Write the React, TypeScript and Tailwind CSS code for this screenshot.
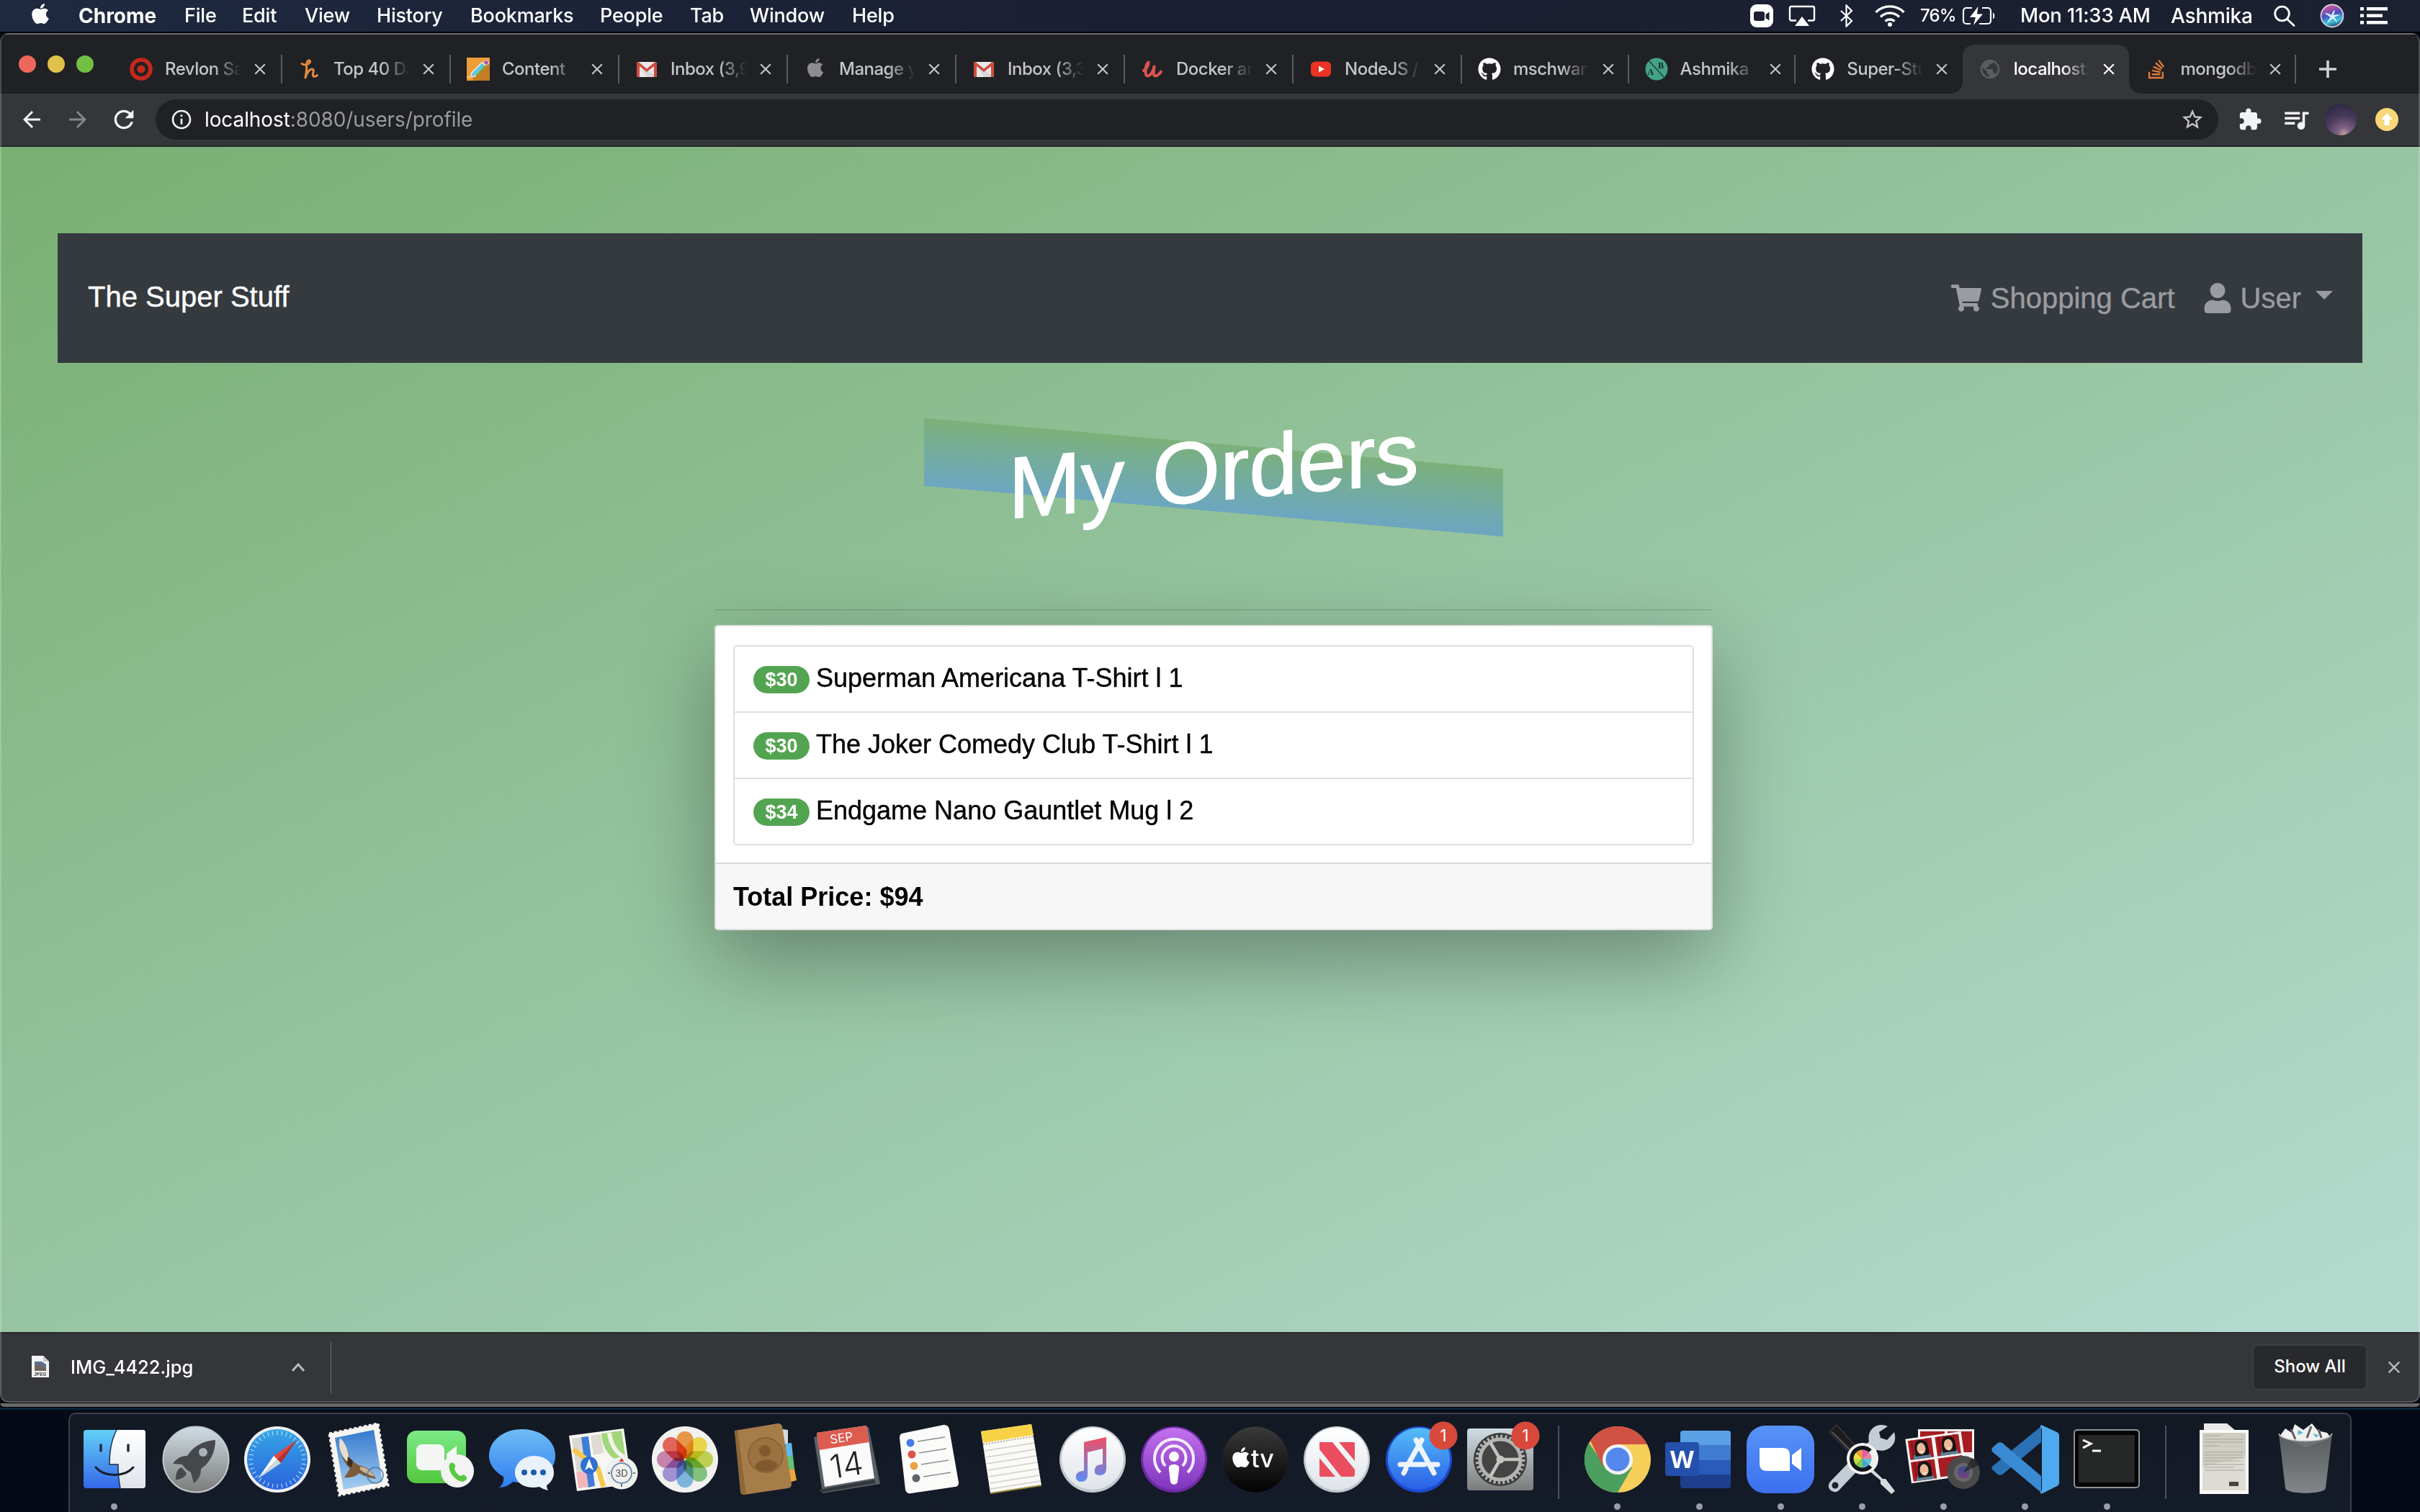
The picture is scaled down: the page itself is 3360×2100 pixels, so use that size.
import React from "react";
import {
  FaApple,
  FaGithub,
  FaShoppingCart,
  FaStackOverflow,
  FaUser,
} from "react-icons/fa";
import {
  MdArrowBack,
  MdArrowForward,
  MdClose,
  MdExtension,
  MdInfoOutline,
  MdPublic,
  MdQueueMusic,
  MdRefresh,
  MdStarBorder,
} from "react-icons/md";

/* ---------- macOS menu bar ---------- */

const menuItems = [
  { label: "Chrome", box: "w-[147px] text-[28px] font-bold tracking-[0px]" },
  { label: "File", box: "w-[80px]" },
  { label: "Edit", box: "w-[87px]" },
  { label: "View", box: "w-[100px]" },
  { label: "History", box: "w-[130px]" },
  { label: "Bookmarks", box: "w-[180px]" },
  { label: "People", box: "w-[125px]" },
  { label: "Tab", box: "w-[83px]" },
  { label: "Window", box: "w-[142px]" },
  { label: "Help", box: "w-[80px]" },
];

function MenuBar() {
  return (
    <header className="flex h-[44px] shrink-0 items-center bg-linear-to-r from-[#1e293f] via-[#1a1e33] to-[#1b2130] text-[27px] font-medium tracking-[-0.200px] text-white">
      <FaApple className="mr-[37px] mb-[6px] ml-[40px] size-[32px]" />
      {menuItems.map((m) => (
        <span key={m.label} className={m.box}>
          {m.label}
        </span>
      ))}
      <div className="ml-auto flex items-center">
        <svg className="mr-[20px] h-[32px] w-[34px]" viewBox="0 0 34 32">
          <rect x="1" width="32" height="32" rx="9" fill="#fff" />
          <rect x="6" y="10" width="15" height="13" rx="3" fill="#1a1f31" />
          <path d="M22.500 14l5-3.500v12l-5-3.500z" fill="#1a1f31" />
        </svg>
        <svg className="mr-[33px] h-[30px] w-[38px]" viewBox="0 0 38 30" fill="none" stroke="#fff" strokeWidth="2.400">
          <path d="M11 21.500H4a2 2 0 0 1-2-2V4a2 2 0 0 1 2-2h30a2 2 0 0 1 2 2v15.500a2 2 0 0 1-2 2h-7" />
          <path d="M19 16l10 13H9z" fill="#fff" stroke="none" />
        </svg>
        <svg className="mr-[28px] h-[32px] w-[20px]" viewBox="0 0 20 32" fill="none" stroke="#fff" strokeWidth="2.200">
          <path d="M2 9l15 14-7.500 7.500V1.500L17 9 2 23" />
        </svg>
        <svg className="mr-[20px] h-[32px] w-[44px]" viewBox="0 0 44 32" fill="none" stroke="#fff" strokeWidth="3.400">
          <path d="M2.500 11a27.500 27.500 0 0 1 39 0" />
          <path d="M9 17.500a18.500 18.500 0 0 1 26 0" />
          <path d="M15.500 23.500a9.500 9.500 0 0 1 13 0" />
          <circle cx="22" cy="28" r="3" fill="#fff" stroke="none" />
        </svg>
        <span className="w-[58px] text-[24px] tracking-[-0.800px]">76%</span>
        <svg className="mr-[34px] h-[26px] w-[47px]" viewBox="0 0 47 26" fill="none" stroke="#fff" strokeWidth="2.200">
          <path d="M14 2H6a4 4 0 0 0-4 4v14a4 4 0 0 0 4 4h6M28 2h8a4 4 0 0 1 4 4v14a4 4 0 0 1-4 4H24" />
          <path d="M22.500 0L11 15h8l-3 11 13-15.500h-8z" fill="#fff" stroke="none" />
          <path d="M43 8.500c3 1.500 3 7.500 0 9z" fill="#fff" stroke="none" />
        </svg>
        <span className="w-[209px] text-[27.500px] whitespace-nowrap">Mon 11:33 AM</span>
        <span className="w-[143px] text-[28px]">Ashmika</span>
        <svg className="mr-[34px] h-[30px] w-[30px]" viewBox="0 0 30 30" fill="none" stroke="#fff" strokeWidth="2.800">
          <circle cx="11.500" cy="12" r="9.800" />
          <path d="M18.500 19.500l9.500 9" strokeLinecap="round" />
        </svg>
        <svg className="mr-[22px] h-[34px] w-[34px]" viewBox="0 0 34 34">
          <defs>
            <linearGradient id="siri" x1="0.300" y1="0" x2="0.600" y2="1">
              <stop offset="0" stopColor="#e8508e" />
              <stop offset="0.450" stopColor="#4b4fc4" />
              <stop offset="0.750" stopColor="#3cc6d8" />
              <stop offset="1" stopColor="#2b3a6e" />
            </linearGradient>
          </defs>
          <circle cx="17" cy="17" r="15.500" fill="url(#siri)" stroke="#cfd3e2" strokeWidth="1.800" />
          <path d="M6 13c4 0 8 1 10 3 1-3 2-6 5-7-1 3-1 5-2 7 3-1 6-1 9 0-3 1-6 2-8 3 2 2 4 5 4 8-2-3-4-5-6-6-3 2-6 4-8 7 1-4 3-7 5-9-3-2-6-4-9-6z" fill="#e6fbff" opacity=".9" />
        </svg>
        <svg className="mr-[45px] h-[26px] w-[38px]" viewBox="0 0 38 26" fill="#fff">
          <path d="M0 1h5v4.500H0zM9 1h29v4.500H9zM0 10.500h5V15H0zM9 10.500h22V15H9zM0 20h5v4.500H0zM9 20h29v4.500H9z" />
        </svg>
      </div>
    </header>
  );
}

/* ---------- browser tab strip ---------- */

const TargetIcon = () => (
  <svg viewBox="0 0 32 32" className="size-[32px]">
    <circle cx="16" cy="16" r="13" fill="none" stroke="#c4281c" strokeWidth="5.600" />
    <circle cx="16" cy="16" r="5.600" fill="#c4281c" />
  </svg>
);
const HoneyIcon = () => (
  <svg viewBox="0 0 32 32" className="size-[32px]" fill="none" stroke="#e58a3c" strokeWidth="3" strokeLinecap="round" strokeLinejoin="round">
    <path d="M5 8.500c4 2.500 9 1.500 11-1.500 1.500-2.500-.5-4-2.500-2.500C11 6.500 12 12 11.500 18L10 28c2-6 5-12 9-12 3.500 0 2 4 1.500 7s1.500 5 6 1.500" />
  </svg>
);
const ContentIcon = () => (
  <svg viewBox="0 0 32 32" className="size-[32px]">
    <path d="M0 0h32v32H0z" fill="#ee9d37" />
    <path d="M27 7l5 4v21H10l-3-5z" fill="#c57c25" />
    <path d="M7 21L21 7l5 4-15 15-5 1z" fill="#5cc6e0" stroke="#f3ecdc" strokeWidth="1.500" />
    <path d="M13 25L26 11" stroke="#63b54d" strokeWidth="2" />
    <path d="M23 6l4-3 4 4-4 4z" fill="#a654b5" stroke="#e9d9ea" strokeWidth="1" />
    <path d="M0 27h8" stroke="#f5c788" strokeWidth="2" />
  </svg>
);
const GmailIcon = () => (
  <svg viewBox="0 0 32 32" className="size-[32px]">
    <rect x="2" y="6" width="28" height="21" rx="2.500" fill="#e9e9e9" />
    <path d="M6 8l10 9 14 10H16z" fill="#c9c9c9" opacity=".6" />
    <path d="M2 8.500A2.500 2.500 0 0 1 4.500 6L16 15.500 27.500 6A2.500 2.500 0 0 1 30 8.500V25a2 2 0 0 1-2 2h-2V12l-10 8L6 12v15H4a2 2 0 0 1-2-2z" fill="#cf4b3e" />
  </svg>
);
const UdemyIcon = () => (
  <svg viewBox="0 0 32 32" className="size-[32px]" fill="none" stroke="#dc5252" strokeWidth="4" strokeLinecap="round" strokeLinejoin="round">
    <path d="M4 18c4-2 7-8 6.500-11.500C8 8 6.500 14 6.500 19c0 4 1 6.500 3 6.500 4 0 8-7 9-13-1 8-1.500 13 1.500 13s5-2 8-6" />
  </svg>
);
const YoutubeIcon = () => (
  <svg viewBox="0 0 32 32" className="size-[32px]">
    <rect x="2" y="5.500" width="28" height="21" rx="6" fill="#ea3323" />
    <path d="M13 11.500l8 4.500-8 4.500z" fill="#fff" />
  </svg>
);
const AbIcon = () => (
  <svg viewBox="0 0 32 32" className="size-[32px]">
    <circle cx="16" cy="16" r="15.500" fill="#44a287" />
    <path d="M5 4l21 23" stroke="#15372e" strokeWidth="1.200" />
    <text x="3.500" y="24" fontSize="12" fontWeight="700" fontFamily="Liberation Serif" fill="#10251f">A</text>
    <text x="18" y="15" fontSize="12" fontWeight="700" fontFamily="Liberation Serif" fill="#10251f">B</text>
  </svg>
);

type TabInfo = { title: string; icon: React.ReactNode; active?: boolean; noLine?: boolean };

const tabs: TabInfo[] = [
  { title: "Revlon Sa", icon: <TargetIcon /> },
  { title: "Top 40 Da", icon: <HoneyIcon /> },
  { title: "Content", icon: <ContentIcon /> },
  { title: "Inbox (3,9", icon: <GmailIcon /> },
  { title: "Manage y", icon: <FaApple className="mb-[4px] size-[30px] text-[#8d8d8f]" /> },
  { title: "Inbox (3,3", icon: <GmailIcon /> },
  { title: "Docker an", icon: <UdemyIcon /> },
  { title: "NodeJS /", icon: <YoutubeIcon /> },
  { title: "mschwarz", icon: <FaGithub className="size-[32px] text-white" /> },
  { title: "Ashmika", icon: <AbIcon /> },
  { title: "Super-Stu", icon: <FaGithub className="size-[32px] text-white" />, noLine: true },
  { title: "localhost:", icon: <MdPublic className="size-[32px] text-[#5b5c60]" />, active: true, noLine: true },
  { title: "mongodb", icon: <FaStackOverflow className="size-[30px] text-[#e07b39]" /> },
];

function Tab({ title, icon, active, noLine }: TabInfo) {
  return (
    <div
      className={
        active
          ? "relative flex h-[68px] w-full items-center rounded-t-[16px] bg-[#35363a] text-white"
          : "relative flex h-[68px] w-full items-center text-[#c3c5c8]"
      }
    >
      {active && (
        <>
          <i className="absolute bottom-0 left-[-16px] size-[16px] bg-[radial-gradient(circle_at_0_0,transparent_15.500px,#35363a_16px)]" />
          <i className="absolute right-[-16px] bottom-0 size-[16px] bg-[radial-gradient(circle_at_100%_0,transparent_15.500px,#35363a_16px)]" />
        </>
      )}
      <span className="ml-[22px] flex w-[32px] justify-center">{icon}</span>
      <span className="ml-[17px] w-[108px] text-[24px] font-medium tracking-[-0.500px] whitespace-nowrap [mask-image:linear-gradient(to_right,black_62%,transparent_98%)]">
        {title}
      </span>
      <MdClose className="ml-[11px] size-[26px]" />
      {!noLine && <span className="ml-auto h-[40px] w-[2px] bg-[#5a5b5f]" />}
    </div>
  );
}

function TabStrip() {
  return (
    <div className="flex h-[84px] shrink-0 items-end border-t-2 border-[#6d6e6e] bg-[#202124]">
      <div className="mb-[29px] ml-[26px] flex w-[132px] gap-[16px]">
        <span className="size-[24px] rounded-full bg-[#ee675c]" />
        <span className="size-[24px] rounded-full bg-[#e0c14b]" />
        <span className="size-[24px] rounded-full bg-[#71c044]" />
      </div>
      {tabs.map((t, i) => (
        <div key={i} className={i < 8 ? "w-[234px] shrink-0" : "w-[231.600px] shrink-0"}>
          <Tab {...t} />
        </div>
      ))}
      <svg className="mb-[21px] ml-[31px] size-[26px]" viewBox="0 0 26 26" stroke="#d0d2d5" strokeWidth="3.600">
        <path d="M13 1v24M1 13h24" />
      </svg>
    </div>
  );
}

function Toolbar() {
  return (
    <div className="flex h-[74px] shrink-0 items-center border-b-2 border-[#252629] bg-[#35363a] text-[#f1f3f4]">
      <MdArrowBack className="ml-[26px] size-[36px]" />
      <MdArrowForward className="ml-[28px] size-[36px] text-[#85868a]" />
      <MdRefresh className="ml-[26px] size-[40px]" />
      <div className="ml-[24px] flex h-[56px] w-[2864px] items-center rounded-full bg-[#202124]">
        <MdInfoOutline className="ml-[20px] size-[32px]" />
        <span className="ml-[16px] text-[28px] tracking-[-0.100px] text-[#9a9b9e]">
          <span className="text-white">localhost</span>:8080/users/profile
        </span>
        <MdStarBorder className="mr-[19px] ml-auto size-[34px] text-[#c7c8ca]" />
      </div>
      <MdExtension className="ml-[27px] size-[34px]" />
      <MdQueueMusic className="ml-[26px] size-[42px]" />
      <span className="ml-[19px] size-[44px] rounded-full bg-[radial-gradient(circle_at_60%_95%,#c29ba0_0,#7d6283_18%,#4a3b5c_50%,#2d2843_85%)]" />
      <svg className="ml-[25px] size-[34px]" viewBox="0 0 34 34">
        <circle cx="17" cy="17" r="16" fill="#f8d779" />
        <path d="M17 8l8 9h-4.500v8h-7v-8H9z" fill="#fff" />
      </svg>
    </div>
  );
}

/* ---------- web page ---------- */

const orders = [
  { price: "$30", text: "Superman Americana T-Shirt l 1" },
  { price: "$30", text: "The Joker Comedy Club T-Shirt l 1" },
  { price: "$34", text: "Endgame Nano Gauntlet Mug l 2" },
];

function OrdersPage() {
  return (
    <main className="flex h-[1646px] shrink-0 flex-col items-center bg-[linear-gradient(to_bottom_right,#79af73,#b5dbd0)] font-['Liberation_Sans',Arial,sans-serif] text-black">
      <nav className="mt-[120px] flex h-[180px] w-[3200px] shrink-0 items-center bg-[#353a3f] pr-[41px] pl-[42px] text-[40px] text-[#999ca0]">
        <span className="mb-[4px] [-webkit-text-stroke:0.400px]">
          <span className="text-white">The Super Stuff</span>
        </span>
        <span className="ml-auto flex items-center">
          <FaShoppingCart className="mr-[13px] size-[42px]" />
          <span className="[-webkit-text-stroke:0.400px]">Shopping Cart</span>
        </span>
        <span className="ml-[38px] flex items-center">
          <FaUser className="mr-[11px] size-[42px]" />
          <span className="[-webkit-text-stroke:0.400px]">User</span>
          <i className="mb-[8px] ml-[20px] border-x-[12px] border-t-[12px] border-x-transparent border-t-[#999ca0]" />
        </span>
      </nav>
      <section className="flex w-[1386px] translate-x-[5px] flex-col items-center">
        <h1 className="mt-[112px] flex h-[94px] w-[804px] skew-y-[5deg] items-center justify-center bg-linear-to-b from-[#7cb078] to-[#6ca6c1] text-[121px] leading-none text-white">
          <span className="-translate-y-[10px] skew-y-[-10deg] [word-spacing:5px] whitespace-nowrap [-webkit-text-stroke:1.400px]">My Orders</span>
        </h1>
        <hr className="mt-[136px] w-full border-t-2 border-black/10" />
        <div className="mt-[20px] w-full rounded-[5px] border-2 border-[#dfdfdf] bg-white shadow-[0_40px_120px_rgba(0,0,0,0.340)]">
          <ul className="mx-[24px] mt-[26px] mb-[24px] rounded-[5px] border-2 border-[#dfdfdf] text-[36px]">
            {orders.map((o) => (
              <li key={o.text} className="flex h-[92px] items-center border-b-2 border-[#dfdfdf] pl-[26px] last:h-[90px] last:border-b-0">
                <span className="mt-[2px] mr-[9px] flex h-[38px] w-[78px] items-center justify-center rounded-full bg-[#53a451] text-[27px] font-bold text-white">
                  {o.price}
                </span>
                <span className="mb-[2px] [-webkit-text-stroke:0.400px]">{o.text}</span>
              </li>
            ))}
          </ul>
          <div className="flex h-[92px] items-center rounded-b-[4px] border-t-2 border-[#d8d8d8] bg-[#f7f7f7] pt-[2px] pl-[24px] text-[36px] font-bold">
            Total Price: $94
          </div>
        </div>
      </section>
    </main>
  );
}

function DownloadBar() {
  return (
    <div className="flex h-[98px] shrink-0 items-center rounded-b-[12px] border-t-2 border-b-2 border-t-[#2a2b2e] border-b-[#5a5a5d] bg-[#353639] text-[25.500px] font-medium text-white">
      <svg className="mb-[2px] ml-[44px] h-[30px] w-[24px]" viewBox="0 0 24 30">
        <path d="M0 0h16l8 8v22H0z" fill="#f4f4f4" />
        <path d="M16 0v8h8z" fill="#c8c8c8" />
        <path d="M4 8h10l6 4v8H4z" fill="#5a6f96" />
        <path d="M4 14l7-3 9 8v2H4z" fill="#6e665a" />
        <text x="3" y="27.500" fontSize="6.500" fontWeight="700" fill="#444" fontFamily="Liberation Sans">JPEG</text>
      </svg>
      <span className="ml-[30px] w-[307px]">IMG_4422.jpg</span>
      <svg className="size-[18px]" viewBox="0 0 18 18" fill="none" stroke="#b9babc" strokeWidth="3">
        <path d="M1 14l8-9 8 9" />
      </svg>
      <span className="ml-[36px] h-[72px] w-[1px] bg-[#6d6e71]" />
      <span className="ml-auto flex h-[64px] w-[160px] items-center justify-center rounded-[8px] border-2 border-[#3c3d40] bg-[#28292c] pb-[2px] text-[24px]">
        Show All
      </span>
      <MdClose className="mr-[22px] ml-[23px] size-[28px] text-[#b9babc]" />
    </div>
  );
}

/* ---------- dock ---------- */

type IconProps = { children: React.ReactNode };
const Art = ({ children }: IconProps) => (
  <svg viewBox="0 0 100 100" className="size-[100px] overflow-visible">
    {children}
  </svg>
);

const Badge = ({ x }: { x: number }) => (
  <g>
    <circle cx={x} cy="17" r="19.500" fill="#d8493c" />
    <text x={x} y="25" textAnchor="middle" fontSize="23" fill="#fff" fontFamily="Inter">1</text>
  </g>
);

const ticks = Array.from({ length: 36 }, (_, i) => i * 10);
const petals = [
  ["#f3a04a", 0],
  ["#f8e24e", 45],
  ["#c9dc58", 90],
  ["#8ccb88", 135],
  ["#86bfeb", 180],
  ["#a99add", 225],
  ["#d28cb8", 270],
  ["#ef6a5e", 315],
] as const;
const wheel = ["#e05aa6", "#f07ba0", "#58c3de", "#48a7c9", "#7dcb5a", "#b6dc4b", "#f2dc43", "#f09a45"];

const Finder = () => (
  <Art>
    <rect x="7" y="9" width="86" height="81" rx="4" fill="url(#gFinder)" />
    <path d="M53 9h36a4 4 0 0 1 4 4v73a4 4 0 0 1-4 4H58c-2-9-3-21-3-33H43C43 38 46 22 53 9z" fill="url(#gPaper)" />
    <path d="M31 30v8M69 30v8" stroke="#1c2c42" strokeWidth="3.500" strokeLinecap="round" />
    <path d="M24 61c12 14 40 14 52 0" fill="none" stroke="#14202f" strokeWidth="3" strokeLinecap="round" />
    <path d="M53 9c-7 13-10 29-10 48h12c0 12 1 24 3 33" fill="none" stroke="#1d2c44" strokeWidth="1.500" />
  </Art>
);
const Launchpad = () => (
  <Art>
    <circle cx="50" cy="50" r="45.500" fill="url(#gSteel)" stroke="#c3c9cc" strokeWidth="2" />
    <path d="M77 23c-18 1-32 10-39 22-9 0-15 4-20 11l13 1c3 5 8 9 12 11l4 15c7-5 10-11 10-20 12-8 20-22 20-40z" fill="#45494c" />
    <circle cx="60" cy="40" r="6" fill="#a9b3b8" />
    <path d="M30 61c-7 3-8 10-8 17 7 0 13-3 15-9z" fill="#45494c" />
  </Art>
);
const Safari = () => (
  <Art>
    <circle cx="50" cy="50" r="46" fill="#eef0f2" />
    <circle cx="50" cy="50" r="42" fill="url(#gSafari)" />
    <g stroke="#cfe6fb" strokeWidth="1">
      {ticks.map((a) => (
        <path key={a} d="M50 10v6" transform={`rotate(${a} 50 50)`} />
      ))}
    </g>
    <path d="M77 23L45 45l5 5z" fill="#e8453c" />
    <path d="M77 23L55 55l-5-5z" fill="#b92f2b" />
    <path d="M23 77l22-32 5 5z" fill="#fff" />
    <path d="M23 77l32-22-5-5z" fill="#cfd8de" />
  </Art>
);
const MailIcon = () => (
  <Art>
    <path d="M9 14l68-14 14 86-68 14z" fill="#f6f5f2" stroke="#f6f5f2" strokeWidth="3" strokeDasharray="4 3" />
    <path d="M17 20l54-11 12 72-54 11z" fill="url(#gSky)" />
    <path d="M24 22c7 6 12 16 14 28l12 8c12 2 20 9 24 19-9-1-17-4-23-8-6 5-13 7-21 6l8-12C28 53 22 38 24 22z" fill="#7b5b38" />
    <path d="M24 20c-3 12 1 25 10 33l3-3c-2-14-6-24-13-30z" fill="#e6ddd0" />
    <path d="M52 60c9 1 16 6 20 14-8-2-15-6-20-10z" fill="#c9b596" />
    <path d="M35 46l7 6-2 9-6-4z" fill="#3e2c1c" />
    <circle cx="73" cy="72" r="11" fill="none" stroke="#4f7099" strokeWidth="2" opacity=".7" />
  </Art>
);
const Facetime = () => (
  <Art>
    <rect x="4" y="10" width="82" height="73" rx="13" fill="url(#gGreen)" />
    <rect x="17" y="29" width="39" height="36" rx="8" fill="#f4f6f4" />
    <path d="M59 42l14-11v32l-14-10z" fill="#f4f6f4" />
    <circle cx="74" cy="66" r="23" fill="#f3f3f3" />
    <path d="M63 57c3-4 6-3 8 1 1 3-2 4-1 6 2 4 4 7 8 9 2 0 3-3 6-1 4 2 4 5 0 8-9 4-24-12-21-23z" fill="#56c940" />
  </Art>
);
const Messages = () => (
  <Art>
    <path d="M50 8c26 0 46 16 46 37S76 82 50 82c-5 0-9 0-13-1-5 5-12 8-19 8 5-4 7-9 6-15C12 67 4 57 4 45 4 24 24 8 50 8z" fill="url(#gBlue)" />
    <path d="M67 45c15 0 27 10 27 23 0 8-4 14-10 18 0 3 1 5 2 7-5-1-9-3-12-5-21 4-34-6-34-20 0-13 12-23 27-23z" fill="#e9f1fa" />
    <g fill="#1d5bab">
      <circle cx="53" cy="68" r="4" />
      <circle cx="66" cy="68" r="4" />
      <circle cx="79" cy="68" r="4" />
    </g>
  </Art>
);
const Maps = () => (
  <Art>
    <path d="M2 17L78 7l11 77-76 10z" fill="#f8f6f2" />
    <path d="M6 21l14-2 9 68-13 3z" fill="#d9d9d2" />
    <path d="M19 19l10-1 9 69-10 2z" fill="#3f7ed8" />
    <path d="M32 17l14-2 4 26-14 3z" fill="#dedcd2" />
    <path d="M47 14l28-4 7 48c-20-6-34-21-35-44z" fill="#a2d67a" />
    <path d="M58 13c2 16 8 27 21 34" fill="none" stroke="#f2f2e6" strokeWidth="6" />
    <path d="M8 36l34 26 8 26" fill="none" stroke="#f7c64c" strokeWidth="7" />
    <path d="M12 68l14-2 3 22-14 2z" fill="#f1b7bd" />
    <circle cx="30" cy="58" r="12" fill="#2f6fd0" />
    <path d="M30 49l6 16-6-4-6 4z" fill="#fff" />
    <circle cx="75" cy="69" r="22.500" fill="#f0f0ee" />
    <circle cx="75" cy="69" r="14" fill="none" stroke="#6d8fae" strokeWidth="2" />
    <path d="M75 48l3.500 5h-7z" fill="#d8362b" />
    <path d="M75 84v4M56 69h3M91 69h3" stroke="#444" strokeWidth="1.500" />
    <text x="75" y="74" textAnchor="middle" fontSize="13" fill="#444" fontFamily="Inter">3D</text>
  </Art>
);
const Photos = () => (
  <Art>
    <circle cx="50" cy="50" r="46" fill="#f1f1f0" />
    {petals.map(([c, a]) => (
      <rect key={a} x="38.500" y="11" width="23" height="38" rx="11.500" fill={c} className="mix-blend-multiply" transform={`rotate(${a} 50 50)`} />
    ))}
  </Art>
);
const Contacts = () => (
  <Art>
    <path d="M72 8l8 1v20h-8z" fill="#d7dadd" />
    <path d="M76 28l9-1 2 18-9 2z" fill="#62b8e6" />
    <path d="M78 46l9-1 2 18-9 2z" fill="#62c474" />
    <path d="M80 64l9-1 3 16-11 3z" fill="#e9a63c" />
    <path d="M6 10L66 0c4 0 5 2 6 4l13 80c0 4-2 5-5 6l-61 9c-4 0-5-3-5-5z" fill="#a67c49" />
    <path d="M6 10l4 0 12 89-3 0c-4 0-5-3-5-5z" fill="#8d6737" />
    <circle cx="49" cy="44" r="24" fill="#9b7240" stroke="#845f32" strokeWidth="1.500" />
    <circle cx="48" cy="38" r="8" fill="#80592f" />
    <path d="M34 60c4-12 27-13 32-2-8 11-24 12-32 2z" fill="#80592f" />
  </Art>
);
const Calendar = () => (
  <Art>
    <path d="M3 19l76-14 16 79-80 13z" fill="#5a6067" />
    <path d="M10 92l77-14 2 5-76 13z" fill="#33373c" />
    <path d="M7 13L76 3l11 73-69 12z" fill="#fafafa" />
    <path d="M7 13L76 3l3.500 23L10 37z" fill="#dd5c50" />
    <g transform="rotate(-9 50 50)" fontFamily="Inter" textAnchor="middle">
      <text x="46" y="25" fontSize="17" fill="#fff">SEP</text>
      <text x="47" y="73" fontSize="45" fontWeight="300" fill="#222">14</text>
    </g>
  </Art>
);
const Reminders = () => (
  <Art>
    <path d="M20 94l66-10 6-5c0 4-2 7-5 8l-61 10c-3 0-5-1-6-3z" fill="#2b2f36" />
    <path d="M12 14l58-12c5 0 7 2 8 6l13 74c0 4-2 6-5 6l-61 9c-4 1-7-1-8-5L9 20c0-3 1-5 3-6z" fill="#fbfbfa" />
    {[
      ["#4579ee", 24, 27],
      ["#dd5344", 26, 43],
      ["#e9a24a", 29, 59],
      ["#5e6469", 32, 76],
    ].map(([c, x, y]) => (
      <g key={String(c)}>
        <circle cx={Number(x)} cy={Number(y)} r="5.500" fill={String(c)} />
        <path d={`M${Number(x) + 10} ${Number(y) - 2}l38-6`} stroke="#8d8d8d" strokeWidth="1.300" />
      </g>
    ))}
  </Art>
);
const Notes = () => (
  <Art>
    <path d="M8 11L78 1l14 85-71 11z" fill="#fbfaf6" />
    <path d="M8 11L78 1l3 15-70 11z" fill="#f7d247" />
    <path d="M11 29l70-11" stroke="#97958d" strokeWidth="1.500" strokeDasharray="2 2" />
    <path d="M13 38l69-11M15 47l68-11M16 56l69-11M18 65l68-11M19 74l69-11M20 83l70-11M21 91l70-11" stroke="#cfcfca" strokeWidth="1.500" />
    <path d="M21 97l71-11" stroke="#a08a3c" strokeWidth="2" />
  </Art>
);
const Music = () => (
  <Art>
    <circle cx="50" cy="50" r="46" fill="#c3c7ce" />
    <circle cx="50" cy="49" r="43" fill="url(#gPaper)" />
    <path d="M38 26l31-7v44c0 6-4 9-9 9-6 0-8-4-7-8 1-6 6-7 11-7V35l-21 5v32c0 6-4 9-9 9s-8-4-7-8c1-6 6-7 11-7z" fill="url(#gNote)" />
  </Art>
);
const Podcasts = () => (
  <Art>
    <circle cx="50" cy="50" r="46" fill="#6d2aa5" />
    <circle cx="50" cy="49" r="43" fill="url(#gPurple)" />
    <g fill="none" stroke="#f6eefb" strokeWidth="4">
      <path d="M31 68a27 27 0 1 1 38 0" />
      <path d="M38 59a16.500 16.500 0 1 1 24 0" />
    </g>
    <circle cx="50" cy="46" r="7" fill="#fff" />
    <path d="M50 57c5 0 8 2 7 7l-2 17c-1 5-9 5-10 0l-2-17c-1-5 2-7 7-7z" fill="#fff" />
  </Art>
);
const AppleTv = () => (
  <Art>
    <circle cx="50" cy="50" r="45.500" fill="url(#gBlack)" />
    <FaApple x="14" y="31" size={32} color="#fff" />
    <text x="44" y="61" fontSize="34" fontWeight="500" fill="#fff" fontFamily="Inter">tv</text>
  </Art>
);
const News = () => (
  <Art>
    <circle cx="50" cy="50" r="46" fill="#c3c7ce" />
    <circle cx="50" cy="49" r="43.500" fill="url(#gPaper)" />
    <g fill="#ea4e5f">
      <path d="M26 26h18l31 38v7c0 2-1 3-3 3H56L26 36z" />
      <path d="M53 26h20a2 2 0 0 1 2 2v24z" />
      <path d="M26 48v24a2 2 0 0 0 2 2h20z" />
    </g>
  </Art>
);
const AppStore = () => (
  <Art>
    <circle cx="50" cy="50" r="46" fill="#1c4ad1" />
    <circle cx="50" cy="49" r="43" fill="url(#gBlue2)" />
    <g stroke="#eef4fd" strokeWidth="7" strokeLinecap="round">
      <path d="M46 23l25 46M54 23L35 57M32 63l-3 6" />
      <path d="M24 57h34M68 57h8" />
    </g>
    <Badge x={84} />
  </Art>
);
const Preferences = () => (
  <Art>
    <rect x="4" y="7" width="92" height="86" rx="4" fill="url(#gSteel)" />
    <circle cx="50" cy="50" r="37" fill="#3a3c3e" />
    <circle cx="50" cy="50" r="28" fill="#444" stroke="#b3b3b0" strokeWidth="5" />
    <circle cx="50" cy="50" r="32" fill="none" stroke="#b3b3b0" strokeWidth="5" strokeDasharray="3 3.280" />
    <path d="M50 50h27M50 50L36 26M50 50L36 74" stroke="#c4c4c0" strokeWidth="4.500" />
    <circle cx="50" cy="50" r="5.500" fill="#c4c4c0" />
    <Badge x={85} />
  </Art>
);
const Chrome = () => (
  <Art>
    <circle cx="50" cy="50" r="46" fill="#f6ce5a" />
    <path d="M10 27a46 46 0 0 0 40 69l20-35H34z" fill="#4b9f5f" />
    <path d="M50 29h41A46 46 0 0 0 12 24l18 36z" fill="#cf5244" />
    <circle cx="50" cy="50" r="21" fill="#f3f3f3" />
    <circle cx="50" cy="50" r="16.500" fill="#5488ec" />
  </Art>
);
const Word = () => (
  <Art>
    <rect x="24" y="10" width="70" height="80" rx="4" fill="#1d3e8b" />
    <path d="M28 10h62a4 4 0 0 1 4 4v16H24V14a4 4 0 0 1 4-4z" fill="#5aa1e6" />
    <path d="M24 30h70v21H24z" fill="#3f7cd0" />
    <path d="M24 51h70v20H24z" fill="#2a5bbb" />
    <rect x="3" y="26" width="47" height="47" rx="4" fill="#2350ab" />
    <text x="26.500" y="62" textAnchor="middle" fontSize="34" fontWeight="700" fill="#fff" fontFamily="Open Sans, sans-serif" textLength="33">W</text>
  </Art>
);
const ZoomApp = () => (
  <Art>
    <rect x="3" y="3" width="94" height="94" rx="26" fill="url(#gZoom)" />
    <path d="M21 34h32c7 0 10 4 10 10v22H31c-7 0-10-4-10-10z" fill="#fff" />
    <path d="M66 44l13-10v32L66 56z" fill="#fff" />
  </Art>
);
const Tools = () => (
  <Art>
    <path d="M4 12L14 2l34 38-8 8z" fill="#1c1c1d" stroke="#3b3b3b" strokeWidth="1.500" />
    <path d="M8 12l34 34" stroke="#555" strokeWidth="2" />
    <path d="M85 4c-8-4-18-2-23 5-4 5-4 11-3 16L5 81c-3 4-3 9 1 12s9 3 12-1l52-55c8 2 16 0 21-6 5-6 5-12 3-19L84 23l-9-3-2-8z" fill="#c4cdd4" />
    <circle cx="12" cy="86" r="4.500" fill="#1b212c" />
    <path d="M60 60l18 17 4 0 13 17-5 4-15-14v-5L57 64z" fill="#d5dadd" />
    <circle cx="50" cy="49" r="22" fill="#f2f3ef" />
    <circle cx="50" cy="49" r="18" fill="#10161b" />
    <path d="M50 49l13-13a18 18 0 0 1 1 26z" fill="#eef0ec" />
    {wheel.map((c, i) => (
      <path key={c} d="M50 49V36.500a12.500 12.500 0 0 1 8.840 3.660z" fill={c} transform={`rotate(${i * 45} 50 49)`} />
    ))}
  </Art>
);
const Portrait = ({ x, y }: { x: number; y: number }) => (
  <g transform={`translate(${x} ${y})`}>
    <path d="M0 0h33v27H0z" fill="#a81d22" />
    <path d="M5 0v27M12 0v27M26 0v27" stroke="#86151a" strokeWidth="2" />
    <path d="M4 27c1-6 5-9 8-9h9c4 0 8 3 9 9z" fill="#5f8099" />
    <path d="M17 1c8 0 10 6 10 13v9H8v-9C8 7 10 1 17 1z" fill="#181413" />
    <ellipse cx="17" cy="13" rx="6" ry="8" fill="#e9b999" />
    <path d="M14 17c2 2 4 2 6 0z" fill="#fff" />
  </g>
);
const PhotoBooth = () => (
  <Art>
    <rect x="14" y="8" width="78" height="60" fill="#f5f2f2" />
    <path d="M17 11h34v50H17zM55 11h34v29H55z" fill="#a81d22" />
    <g transform="rotate(-8 40 52)">
      <rect x="1" y="16" width="78" height="62" fill="#f8f6f6" />
      <Portrait x={4} y={19} />
      <Portrait x={42} y={19} />
      <Portrait x={4} y={49} />
      <path d="M42 49h34v26H42z" fill="#a81d22" />
    </g>
    <circle cx="77" cy="68" r="23" fill="#4a4a4b" />
    <circle cx="77" cy="68" r="13" fill="#676768" />
    <circle cx="77" cy="68" r="8.500" fill="url(#gLens)" />
    <path d="M77 68l12-20c4 2 7 5 9 10z" fill="#1f1f20" opacity=".7" />
  </Art>
);
const VsCode = () => (
  <Art>
    <path d="M4 64l8 7c2 1 4 1 6 0L72 26V4L5 59c-2 2-2 4-1 5z" fill="#2a71b5" />
    <path d="M4 34l8-7c2-1 4-1 6 0l54 46v23L5 40c-2-2-2-4-1-6z" fill="#3a8bd3" />
    <path d="M71 96c-1 1 1 2 3 1l20-10c2-1 3-3 3-5V17c0-2-1-4-3-5L74 3c-2-1-4 0-3 2 1 1 2 2 2 4v82c0 2-1 4-2 5z" fill="#4fa9ee" />
  </Art>
);
const Terminal = () => (
  <Art>
    <rect x="5" y="9" width="90" height="80" rx="4" fill="#050505" stroke="#8b9197" strokeWidth="2" />
    <rect x="11" y="16" width="78" height="66" fill="#262727" />
    <path d="M17 23l11 5-11 6" fill="none" stroke="#fff" strokeWidth="3" />
    <path d="M30 38h12" stroke="#fff" strokeWidth="3" />
  </Art>
);
const DocFile = () => (
  <Art>
    <path d="M22 0h32l12 10v4H22z" fill="#e9e9e9" />
    <rect x="16" y="9" width="68" height="89" fill="#fafafa" />
    <rect x="20" y="13" width="60" height="80" fill="#cfcdc2" />
    <path d="M20 60l60-14v47H20z" fill="#e2e1da" opacity=".7" />
    <path d="M23 17h22M23 22h54M23 26h54M23 31h20M23 40h54M23 44h52M23 48h54M23 52h50M23 57h54M23 61h40M23 65h54" stroke="#a9a79c" strokeWidth="1.100" />
    <rect x="57" y="81" width="13" height="6" fill="#444" />
  </Art>
);
const Trash = () => (
  <Art>
    <path d="M14 18l8-11 9 6 4-12 12 8 12-9 8 10 13 3 6 8-36 12z" fill="#f1f1ef" />
    <path d="M30 8l6 14M58 4l-6 16M68 8l4 12" stroke="#5e5e5e" strokeWidth="3" />
    <path d="M40 9l7 4-8 3zM60 14l8 2-3 4z" fill="#57b6d8" />
    <path d="M13 14c4 14 70 14 74 0l-9 76c-2 9-54 9-56 0z" fill="url(#gTrash)" opacity=".93" />
    <path d="M13 14c4 14 70 14 74 0" fill="none" stroke="#b9bdc0" strokeWidth="1.500" />
  </Art>
);

const grads: [string, string, string][] = [
  ["gFinder", "#62d0f8", "#3567e8"],
  ["gPaper", "#ffffff", "#dfe4ea"],
  ["gSteel", "#cfdde3", "#7c7c7c"],
  ["gSafari", "#35a6e6", "#2a62dd"],
  ["gSky", "#3579cf", "#a6cfee"],
  ["gGreen", "#7bea86", "#53c83f"],
  ["gBlue", "#6fbcf4", "#2f7df2"],
  ["gBlue2", "#54bdf8", "#2a5fe6"],
  ["gNote", "#ee4e63", "#5b8df5"],
  ["gPurple", "#c271ee", "#7f35bd"],
  ["gBlack", "#3a3a3b", "#020202"],
  ["gZoom", "#5793f7", "#3c70f0"],
  ["gLens", "#37508c", "#7a3f80"],
  ["gTrash", "#5d6063", "#8a8d90"],
];

const DockItem = ({ children, running }: { children: React.ReactNode; running?: boolean }) => (
  <div className="flex w-[113.200px] shrink-0 flex-col items-center pt-[13px]">
    {children}
    {running && <span className="mt-[11px] size-[9px] rounded-full bg-[#9a9dab]" />}
  </div>
);

const Separator = () => (
  <div className="flex w-[50px] shrink-0 justify-center pt-[16px]">
    <span className="h-[102px] w-[2px] bg-[#4a505d]" />
  </div>
);

const systemApps = [Launchpad, Safari, MailIcon, Facetime, Messages, Maps, Photos, Contacts, Calendar, Reminders, Notes, Music, Podcasts, AppleTv, News, AppStore, Preferences];
const openApps = [Chrome, Word, ZoomApp, Tools, PhotoBooth, VsCode, Terminal];

function Dock() {
  return (
    <footer className="mx-[95px] mt-[4px] flex h-[160px] shrink-0 rounded-t-[10px] border-x-2 border-t-2 border-[#3b404b] bg-linear-to-b from-[#131923] to-[#151c2a] pl-[5px]">
      <svg className="absolute size-0">
        <defs>
          {grads.map(([id, a, b]) => (
            <linearGradient key={id} id={id} x1="0" y1="0" x2="0" y2="1">
              <stop offset="0" stopColor={a} />
              <stop offset="1" stopColor={b} />
            </linearGradient>
          ))}
        </defs>
      </svg>
      <DockItem running>
        <Finder />
      </DockItem>
      {systemApps.map((Icon, i) => (
        <DockItem key={i}>
          <Icon />
        </DockItem>
      ))}
      <Separator />
      {openApps.map((Icon, i) => (
        <DockItem key={i} running>
          <Icon />
        </DockItem>
      ))}
      <Separator />
      <DockItem>
        <DocFile />
      </DockItem>
      <DockItem>
        <Trash />
      </DockItem>
    </footer>
  );
}

export default function App() {
  return (
    <div className="flex h-[2100px] w-[3360px] flex-col overflow-hidden bg-[#050a16] font-['Inter',sans-serif]">
      <MenuBar />
      <div className="h-[2px] shrink-0 bg-black" />
      <div className="relative flex shrink-0 flex-col overflow-hidden rounded-[12px]">
        <TabStrip />
        <Toolbar />
        <OrdersPage />
        <DownloadBar />
        <div className="absolute inset-0 rounded-[12px] border-x-2 border-white/20" />
      </div>
      <div className="h-[6px] shrink-0 rounded-b-[10px] border-t border-black bg-[#69696a]" />
      <div className="h-[4px] shrink-0 border-t border-black bg-[#0a2439]" />
      <Dock />
    </div>
  );
}
